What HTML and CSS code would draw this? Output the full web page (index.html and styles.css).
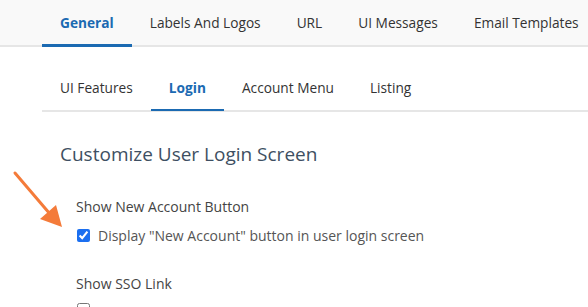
FILE: index.html
```html
<!DOCTYPE html>
<html>
<head>
<meta charset="utf-8">
<link rel="stylesheet" href="styles.css">
</head>
<body>
<div class="topbar">
  <nav class="tabs">
    <a class="tab active">General</a>
    <a class="tab">Labels And Logos</a>
    <a class="tab">URL</a>
    <a class="tab">UI Messages</a>
    <a class="tab">Email Templates</a>
  </nav>
</div>
<div class="content">
  <nav class="subtabs">
    <a class="subtab">UI Features</a>
    <a class="subtab active">Login</a>
    <a class="subtab">Account Menu</a>
    <a class="subtab">Listing</a>
  </nav>
  <section class="panel">
    <h2 class="title">Customize User Login Screen</h2>
    <div class="field">
      <div class="field-label">Show New Account Button</div>
      <label class="check"><input type="checkbox" checked> Display "New Account" button in user login screen</label>
    </div>
    <div class="field field-sso">
      <div class="field-label">Show SSO Link</div>
      <label class="check"><input type="checkbox"></label>
    </div>
  </section>
</div>
<svg class="arrow" width="70" height="240" viewBox="0 0 70 240">
  <line x1="15" y1="173" x2="50" y2="214" stroke="#f47b3a" stroke-width="3" stroke-linecap="round"/>
  <polygon points="62,227 40,219 56,205" fill="#f47b3a"/>
</svg>
</body>
</html>
```
FILE: styles.css
```css
html, body { margin: 0; padding: 0; }
body {
  font-family: "Open Sans", "Noto Sans", sans-serif;
  color: #333;
  background: #fff;
  overflow: hidden;
  width: 588px;
  height: 307px;
}
.topbar {
  background: #f9f9f9;
  border-bottom: 2px solid #e6e6e6;
  height: 45px;
  padding-left: 42px;
}
.tabs { display: flex; height: 100%; white-space: nowrap; }
.tab {
  display: flex;
  align-items: center;
  padding: 0 18px;
  font-size: 13.7px;
  color: #333;
  border-bottom: 3px solid transparent;
  margin-bottom: -2px;
  box-sizing: border-box;
}
.tab.active { color: #1b6ab2; font-weight: 700; border-bottom-color: #1b6ab2; }
.content { padding-left: 42px; }
.subtabs {
  display: flex;
  height: 63px;
  border-bottom: 2px solid #e6e6e6;
  white-space: nowrap;
}
.subtab {
  display: block;
  padding: 31px 18px 0;
  line-height: 20px;
  font-size: 13.7px;
  color: #333;
  border-bottom: 2px solid transparent;
  margin-bottom: -1px;
}
.subtab.active { color: #1b6ab2; font-weight: 700; border-bottom-color: #1b6ab2; }
.panel { padding-left: 18px; }
.title {
  margin: 29px 0 0;
  font-size: 19px;
  font-weight: 400;
  color: #3e4f62;
}
.field { padding-left: 16px; margin-top: 30px; }
.field-sso { margin-top: 29px; }
.field-label { font-size: 14px; line-height: 19px; color: #444; }
.check {
  display: flex;
  align-items: center;
  gap: 8px;
  margin-top: 10px;
  font-size: 14px;
  line-height: 19px;
  color: #555;
}
.check input { margin: 0 0 0 1px; width: 13px; height: 13px; accent-color: #1b6ff0; }
.arrow { position: absolute; left: 0; top: 0; }
```
